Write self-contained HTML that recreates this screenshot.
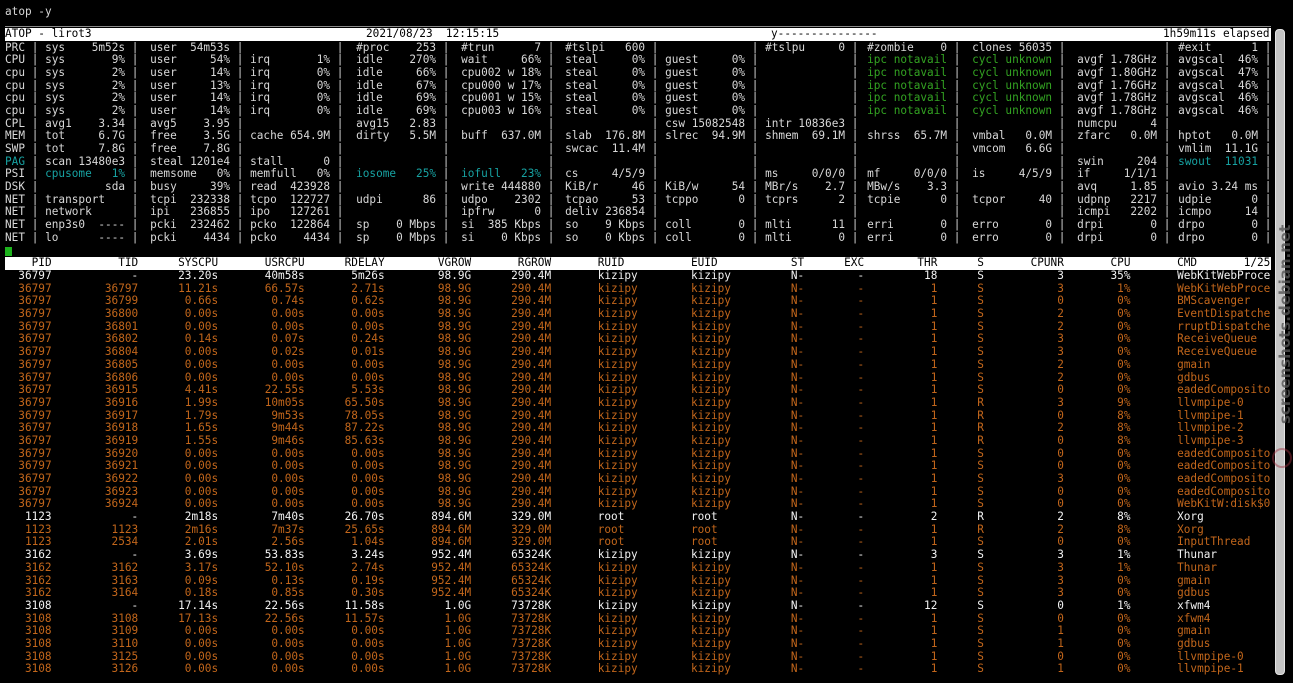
<!DOCTYPE html>
<html><head><meta charset="utf-8">
<style>
*{margin:0;padding:0}
body{background:#000;width:1293px;height:683px;overflow:hidden;position:relative;font-family:"DejaVu Sans Mono","Liberation Mono",monospace;font-size:11.07px;color:#d8d8d8}
.cmd{position:absolute;left:5px;top:5px;line-height:13px;color:#d8d8d8}
.line{position:absolute;left:5px;top:26px;width:1266px;height:1px;background:#8a8a8a}
.hdr{position:absolute;left:5px;top:28px;width:1266px;height:12.7px;line-height:12.7px;background:#fff;color:#000;white-space:pre}
.hdr span{position:absolute;top:0}
.t{position:absolute;left:5px;top:41.5px}
.r{display:grid;grid-template-columns:26.7px 100px 105px 100px 106px 105px 104px 100px 100px 102px 105px 105px 101px 10px;height:12.7px;line-height:12.7px;white-space:pre}
.r i{font-style:normal;display:flex;justify-content:space-between;padding-right:6.66px}
.r b{font-weight:normal;display:flex;justify-content:space-between;width:12ch}
.r em{font-style:normal}
.c{color:#17a2a2}
.g{color:#33a322}
.cur{position:absolute;left:5px;top:247px;width:7px;height:9px;background:#1db31d}
.ph{position:absolute;left:5px;top:257px;width:1266px;height:12.7px;background:#fff;color:#000}
.pt{position:absolute;left:5px;top:270px}
.p{display:grid;grid-template-columns:7ch 13ch 12ch 13ch 12ch 13ch 12ch 21ch 15ch 6ch 5ch 11ch 7ch 12ch 10ch 21ch;height:12.7px;line-height:12.7px;white-space:pre;text-align:right}
.p i{font-style:normal}
.p i:nth-child(8){text-align:left;padding-left:7ch}
.p i:nth-child(9),.p i:nth-child(10){text-align:left}
.p i:nth-child(16){text-align:left;padding-left:7ch}
.w{color:#f2f2f2}
.o{color:#c2661b}
.ph .p{color:#000}
.sb{position:absolute;left:1275px;top:29px;width:8px;height:644px;background:#c4c4c4;border:1px solid #e4e4e4;border-radius:4px}
.wm{position:absolute;left:1200px;top:330px;width:170px;transform:rotate(-90deg);transform-origin:center;color:#555;font-family:"DejaVu Sans","Liberation Sans",sans-serif;font-size:15px;font-weight:bold;opacity:.8}
.logo{position:absolute;left:1272px;top:448px;width:16px;height:16px;border:2px solid #a03040;border-radius:50%;opacity:.45}
</style></head><body>
<div class="cmd">atop -y</div>
<div class="line"></div>
<div class="hdr"><span style="left:0">ATOP - lirot3</span><span style="left:361px">2021/08/23  12:15:15</span><span style="left:766px">y---------------</span><span style="left:1158px">1h59m11s elapsed</span></div>
<div class="t">
<div class="r"><span>PRC</span><i>|<b><em>sys</em>5m52s</b></i><i>|<b><em>user</em>54m53s</b></i><i>|</i><i>|<b><em>#proc</em>253</b></i><i>|<b><em>#trun</em>7</b></i><i>|<b><em>#tslpi</em>600</b></i><i>|</i><i>|<b><em>#tslpu</em>0</b></i><i>|<b><em>#zombie</em>0</b></i><i>|<b><em>clones</em>56035</b></i><i>|</i><i>|<b><em>#exit</em>1</b></i><span>|</span></div>
<div class="r"><span>CPU</span><i>|<b><em>sys</em>9%</b></i><i>|<b><em>user</em>54%</b></i><i>|<b><em>irq</em>1%</b></i><i>|<b><em>idle</em>270%</b></i><i>|<b><em>wait</em>66%</b></i><i>|<b><em>steal</em>0%</b></i><i>|<b><em>guest</em>0%</b></i><i>|</i><i>|<b class="g"><em>ipc</em>notavail</b></i><i>|<b class="g"><em>cycl</em>unknown</b></i><i>|<b><em>avgf</em>1.78GHz</b></i><i>|<b><em>avgscal</em>46%</b></i><span>|</span></div>
<div class="r"><span>cpu</span><i>|<b><em>sys</em>2%</b></i><i>|<b><em>user</em>14%</b></i><i>|<b><em>irq</em>0%</b></i><i>|<b><em>idle</em>66%</b></i><i>|<b><em>cpu002 w</em>18%</b></i><i>|<b><em>steal</em>0%</b></i><i>|<b><em>guest</em>0%</b></i><i>|</i><i>|<b class="g"><em>ipc</em>notavail</b></i><i>|<b class="g"><em>cycl</em>unknown</b></i><i>|<b><em>avgf</em>1.80GHz</b></i><i>|<b><em>avgscal</em>47%</b></i><span>|</span></div>
<div class="r"><span>cpu</span><i>|<b><em>sys</em>2%</b></i><i>|<b><em>user</em>13%</b></i><i>|<b><em>irq</em>0%</b></i><i>|<b><em>idle</em>67%</b></i><i>|<b><em>cpu000 w</em>17%</b></i><i>|<b><em>steal</em>0%</b></i><i>|<b><em>guest</em>0%</b></i><i>|</i><i>|<b class="g"><em>ipc</em>notavail</b></i><i>|<b class="g"><em>cycl</em>unknown</b></i><i>|<b><em>avgf</em>1.76GHz</b></i><i>|<b><em>avgscal</em>46%</b></i><span>|</span></div>
<div class="r"><span>cpu</span><i>|<b><em>sys</em>2%</b></i><i>|<b><em>user</em>14%</b></i><i>|<b><em>irq</em>0%</b></i><i>|<b><em>idle</em>69%</b></i><i>|<b><em>cpu001 w</em>15%</b></i><i>|<b><em>steal</em>0%</b></i><i>|<b><em>guest</em>0%</b></i><i>|</i><i>|<b class="g"><em>ipc</em>notavail</b></i><i>|<b class="g"><em>cycl</em>unknown</b></i><i>|<b><em>avgf</em>1.78GHz</b></i><i>|<b><em>avgscal</em>46%</b></i><span>|</span></div>
<div class="r"><span>cpu</span><i>|<b><em>sys</em>2%</b></i><i>|<b><em>user</em>14%</b></i><i>|<b><em>irq</em>0%</b></i><i>|<b><em>idle</em>69%</b></i><i>|<b><em>cpu003 w</em>16%</b></i><i>|<b><em>steal</em>0%</b></i><i>|<b><em>guest</em>0%</b></i><i>|</i><i>|<b class="g"><em>ipc</em>notavail</b></i><i>|<b class="g"><em>cycl</em>unknown</b></i><i>|<b><em>avgf</em>1.78GHz</b></i><i>|<b><em>avgscal</em>46%</b></i><span>|</span></div>
<div class="r"><span>CPL</span><i>|<b><em>avg1</em>3.34</b></i><i>|<b><em>avg5</em>3.95</b></i><i>|</i><i>|<b><em>avg15</em>2.83</b></i><i>|</i><i>|</i><i>|<b><em>csw</em>15082548</b></i><i>|<b><em>intr</em>10836e3</b></i><i>|</i><i>|</i><i>|<b><em>numcpu</em>4</b></i><i>|</i><span>|</span></div>
<div class="r"><span>MEM</span><i>|<b><em>tot</em>6.7G</b></i><i>|<b><em>free</em>3.5G</b></i><i>|<b><em>cache</em>654.9M</b></i><i>|<b><em>dirty</em>5.5M</b></i><i>|<b><em>buff</em>637.0M</b></i><i>|<b><em>slab</em>176.8M</b></i><i>|<b><em>slrec</em>94.9M</b></i><i>|<b><em>shmem</em>69.1M</b></i><i>|<b><em>shrss</em>65.7M</b></i><i>|<b><em>vmbal</em>0.0M</b></i><i>|<b><em>zfarc</em>0.0M</b></i><i>|<b><em>hptot</em>0.0M</b></i><span>|</span></div>
<div class="r"><span>SWP</span><i>|<b><em>tot</em>7.8G</b></i><i>|<b><em>free</em>7.8G</b></i><i>|</i><i>|</i><i>|</i><i>|<b><em>swcac</em>11.4M</b></i><i>|</i><i>|</i><i>|</i><i>|<b><em>vmcom</em>6.6G</b></i><i>|</i><i>|<b><em>vmlim</em>11.1G</b></i><span>|</span></div>
<div class="r"><span class="c">PAG</span><i>|<b><em>scan</em>13480e3</b></i><i>|<b><em>steal</em>1201e4</b></i><i>|<b><em>stall</em>0</b></i><i>|</i><i>|</i><i>|</i><i>|</i><i>|</i><i>|</i><i>|</i><i>|<b><em>swin</em>204</b></i><i>|<b class="c"><em>swout</em>11031</b></i><span>|</span></div>
<div class="r"><span>PSI</span><i>|<b class="c"><em>cpusome</em>1%</b></i><i>|<b><em>memsome</em>0%</b></i><i>|<b><em>memfull</em>0%</b></i><i>|<b class="c"><em>iosome</em>25%</b></i><i>|<b class="c"><em>iofull</em>23%</b></i><i>|<b><em>cs</em>4/5/9</b></i><i>|</i><i>|<b><em>ms</em>0/0/0</b></i><i>|<b><em>mf</em>0/0/0</b></i><i>|<b><em>is</em>4/5/9</b></i><i>|<b><em>if</em>1/1/1</b></i><i>|</i><span>|</span></div>
<div class="r"><span>DSK</span><i>|<b><em></em>sda</b></i><i>|<b><em>busy</em>39%</b></i><i>|<b><em>read</em>423928</b></i><i>|</i><i>|<b><em>write</em>444880</b></i><i>|<b><em>KiB/r</em>46</b></i><i>|<b><em>KiB/w</em>54</b></i><i>|<b><em>MBr/s</em>2.7</b></i><i>|<b><em>MBw/s</em>3.3</b></i><i>|</i><i>|<b><em>avq</em>1.85</b></i><i>|<b><em>avio</em>3.24 ms</b></i><span>|</span></div>
<div class="r"><span>NET</span><i>|<b><em>transport</em></b></i><i>|<b><em>tcpi</em>232338</b></i><i>|<b><em>tcpo</em>122727</b></i><i>|<b><em>udpi</em>86</b></i><i>|<b><em>udpo</em>2302</b></i><i>|<b><em>tcpao</em>53</b></i><i>|<b><em>tcppo</em>0</b></i><i>|<b><em>tcprs</em>2</b></i><i>|<b><em>tcpie</em>0</b></i><i>|<b><em>tcpor</em>40</b></i><i>|<b><em>udpnp</em>2217</b></i><i>|<b><em>udpie</em>0</b></i><span>|</span></div>
<div class="r"><span>NET</span><i>|<b><em>network</em></b></i><i>|<b><em>ipi</em>236855</b></i><i>|<b><em>ipo</em>127261</b></i><i>|</i><i>|<b><em>ipfrw</em>0</b></i><i>|<b><em>deliv</em>236854</b></i><i>|</i><i>|</i><i>|</i><i>|</i><i>|<b><em>icmpi</em>2202</b></i><i>|<b><em>icmpo</em>14</b></i><span>|</span></div>
<div class="r"><span>NET</span><i>|<b><em>enp3s0</em>----</b></i><i>|<b><em>pcki</em>232462</b></i><i>|<b><em>pcko</em>122864</b></i><i>|<b><em>sp</em>0 Mbps</b></i><i>|<b><em>si</em>385 Kbps</b></i><i>|<b><em>so</em>9 Kbps</b></i><i>|<b><em>coll</em>0</b></i><i>|<b><em>mlti</em>11</b></i><i>|<b><em>erri</em>0</b></i><i>|<b><em>erro</em>0</b></i><i>|<b><em>drpi</em>0</b></i><i>|<b><em>drpo</em>0</b></i><span>|</span></div>
<div class="r"><span>NET</span><i>|<b><em>lo</em>----</b></i><i>|<b><em>pcki</em>4434</b></i><i>|<b><em>pcko</em>4434</b></i><i>|<b><em>sp</em>0 Mbps</b></i><i>|<b><em>si</em>0 Kbps</b></i><i>|<b><em>so</em>0 Kbps</b></i><i>|<b><em>coll</em>0</b></i><i>|<b><em>mlti</em>0</b></i><i>|<b><em>erri</em>0</b></i><i>|<b><em>erro</em>0</b></i><i>|<b><em>drpi</em>0</b></i><i>|<b><em>drpo</em>0</b></i><span>|</span></div>
</div>
<div class="cur"></div>
<div class="ph"><div class="p"><i>PID</i><i>TID</i><i>SYSCPU</i><i>USRCPU</i><i>RDELAY</i><i>VGROW</i><i>RGROW</i><i>RUID</i><i>EUID</i><i>ST</i><i>EXC</i><i>THR</i><i>S</i><i>CPUNR</i><i>CPU</i><i>CMD       1/25</i></div></div>
<div class="pt">
<div class="p w"><i>36797</i><i>-</i><i>23.20s</i><i>40m58s</i><i>5m26s</i><i>98.9G</i><i>290.4M</i><i>kizipy</i><i>kizipy</i><i>N-</i><i>-</i><i>18</i><i>S</i><i>3</i><i>35%</i><i>WebKitWebProce</i></div>
<div class="p o"><i>36797</i><i>36797</i><i>11.21s</i><i>66.57s</i><i>2.71s</i><i>98.9G</i><i>290.4M</i><i>kizipy</i><i>kizipy</i><i>N-</i><i>-</i><i>1</i><i>S</i><i>3</i><i>1%</i><i>WebKitWebProce</i></div>
<div class="p o"><i>36797</i><i>36799</i><i>0.66s</i><i>0.74s</i><i>0.62s</i><i>98.9G</i><i>290.4M</i><i>kizipy</i><i>kizipy</i><i>N-</i><i>-</i><i>1</i><i>S</i><i>0</i><i>0%</i><i>BMScavenger</i></div>
<div class="p o"><i>36797</i><i>36800</i><i>0.00s</i><i>0.00s</i><i>0.00s</i><i>98.9G</i><i>290.4M</i><i>kizipy</i><i>kizipy</i><i>N-</i><i>-</i><i>1</i><i>S</i><i>2</i><i>0%</i><i>EventDispatche</i></div>
<div class="p o"><i>36797</i><i>36801</i><i>0.00s</i><i>0.00s</i><i>0.00s</i><i>98.9G</i><i>290.4M</i><i>kizipy</i><i>kizipy</i><i>N-</i><i>-</i><i>1</i><i>S</i><i>2</i><i>0%</i><i>rruptDispatche</i></div>
<div class="p o"><i>36797</i><i>36802</i><i>0.14s</i><i>0.07s</i><i>0.24s</i><i>98.9G</i><i>290.4M</i><i>kizipy</i><i>kizipy</i><i>N-</i><i>-</i><i>1</i><i>S</i><i>3</i><i>0%</i><i>ReceiveQueue</i></div>
<div class="p o"><i>36797</i><i>36804</i><i>0.00s</i><i>0.02s</i><i>0.01s</i><i>98.9G</i><i>290.4M</i><i>kizipy</i><i>kizipy</i><i>N-</i><i>-</i><i>1</i><i>S</i><i>3</i><i>0%</i><i>ReceiveQueue</i></div>
<div class="p o"><i>36797</i><i>36805</i><i>0.00s</i><i>0.00s</i><i>0.00s</i><i>98.9G</i><i>290.4M</i><i>kizipy</i><i>kizipy</i><i>N-</i><i>-</i><i>1</i><i>S</i><i>2</i><i>0%</i><i>gmain</i></div>
<div class="p o"><i>36797</i><i>36806</i><i>0.00s</i><i>0.00s</i><i>0.00s</i><i>98.9G</i><i>290.4M</i><i>kizipy</i><i>kizipy</i><i>N-</i><i>-</i><i>1</i><i>S</i><i>2</i><i>0%</i><i>gdbus</i></div>
<div class="p o"><i>36797</i><i>36915</i><i>4.41s</i><i>22.55s</i><i>5.53s</i><i>98.9G</i><i>290.4M</i><i>kizipy</i><i>kizipy</i><i>N-</i><i>-</i><i>1</i><i>S</i><i>0</i><i>0%</i><i>eadedComposito</i></div>
<div class="p o"><i>36797</i><i>36916</i><i>1.99s</i><i>10m05s</i><i>65.50s</i><i>98.9G</i><i>290.4M</i><i>kizipy</i><i>kizipy</i><i>N-</i><i>-</i><i>1</i><i>R</i><i>3</i><i>9%</i><i>llvmpipe-0</i></div>
<div class="p o"><i>36797</i><i>36917</i><i>1.79s</i><i>9m53s</i><i>78.05s</i><i>98.9G</i><i>290.4M</i><i>kizipy</i><i>kizipy</i><i>N-</i><i>-</i><i>1</i><i>R</i><i>0</i><i>8%</i><i>llvmpipe-1</i></div>
<div class="p o"><i>36797</i><i>36918</i><i>1.65s</i><i>9m44s</i><i>87.22s</i><i>98.9G</i><i>290.4M</i><i>kizipy</i><i>kizipy</i><i>N-</i><i>-</i><i>1</i><i>R</i><i>2</i><i>8%</i><i>llvmpipe-2</i></div>
<div class="p o"><i>36797</i><i>36919</i><i>1.55s</i><i>9m46s</i><i>85.63s</i><i>98.9G</i><i>290.4M</i><i>kizipy</i><i>kizipy</i><i>N-</i><i>-</i><i>1</i><i>R</i><i>0</i><i>8%</i><i>llvmpipe-3</i></div>
<div class="p o"><i>36797</i><i>36920</i><i>0.00s</i><i>0.00s</i><i>0.00s</i><i>98.9G</i><i>290.4M</i><i>kizipy</i><i>kizipy</i><i>N-</i><i>-</i><i>1</i><i>S</i><i>0</i><i>0%</i><i>eadedComposito</i></div>
<div class="p o"><i>36797</i><i>36921</i><i>0.00s</i><i>0.00s</i><i>0.00s</i><i>98.9G</i><i>290.4M</i><i>kizipy</i><i>kizipy</i><i>N-</i><i>-</i><i>1</i><i>S</i><i>0</i><i>0%</i><i>eadedComposito</i></div>
<div class="p o"><i>36797</i><i>36922</i><i>0.00s</i><i>0.00s</i><i>0.00s</i><i>98.9G</i><i>290.4M</i><i>kizipy</i><i>kizipy</i><i>N-</i><i>-</i><i>1</i><i>S</i><i>3</i><i>0%</i><i>eadedComposito</i></div>
<div class="p o"><i>36797</i><i>36923</i><i>0.00s</i><i>0.00s</i><i>0.00s</i><i>98.9G</i><i>290.4M</i><i>kizipy</i><i>kizipy</i><i>N-</i><i>-</i><i>1</i><i>S</i><i>0</i><i>0%</i><i>eadedComposito</i></div>
<div class="p o"><i>36797</i><i>36924</i><i>0.00s</i><i>0.00s</i><i>0.00s</i><i>98.9G</i><i>290.4M</i><i>kizipy</i><i>kizipy</i><i>N-</i><i>-</i><i>1</i><i>S</i><i>0</i><i>0%</i><i>WebKitW:disk$0</i></div>
<div class="p w"><i>1123</i><i>-</i><i>2m18s</i><i>7m40s</i><i>26.70s</i><i>894.6M</i><i>329.0M</i><i>root</i><i>root</i><i>N-</i><i>-</i><i>2</i><i>R</i><i>2</i><i>8%</i><i>Xorg</i></div>
<div class="p o"><i>1123</i><i>1123</i><i>2m16s</i><i>7m37s</i><i>25.65s</i><i>894.6M</i><i>329.0M</i><i>root</i><i>root</i><i>N-</i><i>-</i><i>1</i><i>R</i><i>2</i><i>8%</i><i>Xorg</i></div>
<div class="p o"><i>1123</i><i>2534</i><i>2.01s</i><i>2.56s</i><i>1.04s</i><i>894.6M</i><i>329.0M</i><i>root</i><i>root</i><i>N-</i><i>-</i><i>1</i><i>S</i><i>0</i><i>0%</i><i>InputThread</i></div>
<div class="p w"><i>3162</i><i>-</i><i>3.69s</i><i>53.83s</i><i>3.24s</i><i>952.4M</i><i>65324K</i><i>kizipy</i><i>kizipy</i><i>N-</i><i>-</i><i>3</i><i>S</i><i>3</i><i>1%</i><i>Thunar</i></div>
<div class="p o"><i>3162</i><i>3162</i><i>3.17s</i><i>52.10s</i><i>2.74s</i><i>952.4M</i><i>65324K</i><i>kizipy</i><i>kizipy</i><i>N-</i><i>-</i><i>1</i><i>S</i><i>3</i><i>1%</i><i>Thunar</i></div>
<div class="p o"><i>3162</i><i>3163</i><i>0.09s</i><i>0.13s</i><i>0.19s</i><i>952.4M</i><i>65324K</i><i>kizipy</i><i>kizipy</i><i>N-</i><i>-</i><i>1</i><i>S</i><i>3</i><i>0%</i><i>gmain</i></div>
<div class="p o"><i>3162</i><i>3164</i><i>0.18s</i><i>0.85s</i><i>0.30s</i><i>952.4M</i><i>65324K</i><i>kizipy</i><i>kizipy</i><i>N-</i><i>-</i><i>1</i><i>S</i><i>3</i><i>0%</i><i>gdbus</i></div>
<div class="p w"><i>3108</i><i>-</i><i>17.14s</i><i>22.56s</i><i>11.58s</i><i>1.0G</i><i>73728K</i><i>kizipy</i><i>kizipy</i><i>N-</i><i>-</i><i>12</i><i>S</i><i>0</i><i>1%</i><i>xfwm4</i></div>
<div class="p o"><i>3108</i><i>3108</i><i>17.13s</i><i>22.56s</i><i>11.57s</i><i>1.0G</i><i>73728K</i><i>kizipy</i><i>kizipy</i><i>N-</i><i>-</i><i>1</i><i>S</i><i>0</i><i>0%</i><i>xfwm4</i></div>
<div class="p o"><i>3108</i><i>3109</i><i>0.00s</i><i>0.00s</i><i>0.00s</i><i>1.0G</i><i>73728K</i><i>kizipy</i><i>kizipy</i><i>N-</i><i>-</i><i>1</i><i>S</i><i>1</i><i>0%</i><i>gmain</i></div>
<div class="p o"><i>3108</i><i>3110</i><i>0.00s</i><i>0.00s</i><i>0.00s</i><i>1.0G</i><i>73728K</i><i>kizipy</i><i>kizipy</i><i>N-</i><i>-</i><i>1</i><i>S</i><i>1</i><i>0%</i><i>gdbus</i></div>
<div class="p o"><i>3108</i><i>3125</i><i>0.00s</i><i>0.00s</i><i>0.00s</i><i>1.0G</i><i>73728K</i><i>kizipy</i><i>kizipy</i><i>N-</i><i>-</i><i>1</i><i>S</i><i>0</i><i>0%</i><i>llvmpipe-0</i></div>
<div class="p o"><i>3108</i><i>3126</i><i>0.00s</i><i>0.00s</i><i>0.00s</i><i>1.0G</i><i>73728K</i><i>kizipy</i><i>kizipy</i><i>N-</i><i>-</i><i>1</i><i>S</i><i>1</i><i>0%</i><i>llvmpipe-1</i></div>
</div>
<div class="sb"></div>
<div class="wm">screenshots.debian.net</div>
<div class="logo"></div>
</body></html>
